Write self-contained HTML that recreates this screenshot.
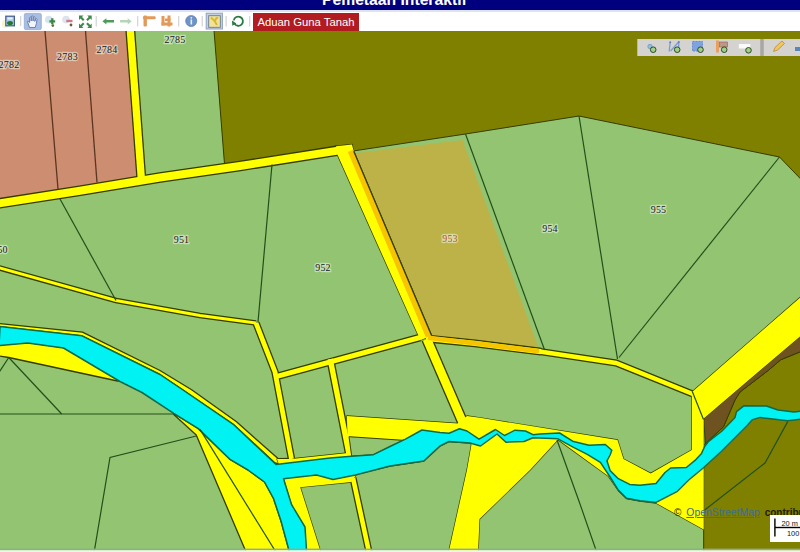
<!DOCTYPE html>
<html><head><meta charset="utf-8">
<style>
html,body{margin:0;padding:0;width:800px;height:552px;overflow:hidden;background:#fff;font-family:"Liberation Sans",sans-serif;}
#hdr{position:absolute;left:0;top:0;width:800px;height:10.1px;background:#00007e;overflow:hidden;}
#hdr span{position:absolute;left:322px;top:-8.6px;font:bold 15.7px "Liberation Sans",sans-serif;color:#fff;white-space:nowrap;}
#hline{position:absolute;left:0;top:10.1px;width:800px;height:1.8px;background:#dde3f3;}
#map{position:absolute;left:0;top:31px;width:800px;height:521px;}
#btn{position:absolute;left:253px;top:13px;width:106px;height:18px;background:#b21b1f;color:#fff;font-size:11.3px;line-height:18px;text-align:center;white-space:nowrap;}
#ui{position:absolute;left:0;top:0;}
.lb{font-family:"Liberation Serif",serif;font-size:10px;font-weight:normal;fill:#202020;text-anchor:middle;stroke:#eef6e8;stroke-width:2.4px;stroke-opacity:0.55;paint-order:stroke;letter-spacing:0.2px;}
#attr{position:absolute;left:674px;top:506.5px;word-spacing:2.2px;font:bold 10px "Liberation Sans",sans-serif;color:#1e1e00;white-space:nowrap;}
#attr a{color:#3d6f86;text-decoration:underline;font-weight:normal;font-size:10.4px;}
#scale{position:absolute;left:770px;top:515px;width:32px;height:27px;background:#fff;}
</style></head><body>
<div id="hdr"><span>Pemetaan Interaktif</span></div>
<div id="hline"></div>
<svg id="map" width="800" height="521" viewBox="0 31 800 521">
<rect x="0" y="31" width="800" height="521" fill="#93c472"/>
<polygon points="0,31 131,31 142,180 0,203" fill="#cd8d70"/>
<polygon points="213.9,29 801,29 801,179.3 779.5,157 579,116 465.5,134 353,151 224.5,164" fill="#808000" stroke="#363c00" stroke-width="1"/>
<polygon points="353,153.5 462.5,140 538.5,348 431,336" fill="#bdb247"/>
<polygon points="-1,345 27.7,342.5 63.5,347.5 120,381 117.5,381 8.75,357.5 -1,356" fill="#ffff00" stroke="#363c00" stroke-width="1.3" stroke-linejoin="round"/>
<polygon points="-1,323.5 82.5,332.2 160,370.5 192,390 236.5,421.8 278,458.6 292,458.5 300,470 281,464.7 275,463 233.75,424.7 183,390 160,374.5 82,335.8 -1,326.5" fill="#ffff00" stroke="#363c00" stroke-width="1.3" stroke-linejoin="round"/>
<polygon points="173.75,413.4 198,428.4 230,459.4 248,470 264.5,482 273.5,498.5 281,521 289.7,553 246.5,553 196.25,435 173.75,414.4" fill="#ffff00" stroke="#363c00" stroke-width="1.3" stroke-linejoin="round"/>
<polygon points="277,459 291.5,459 348,453 346.9,416 457.5,423.4 467,416 480,417.8 617.5,440 623.5,459 650.7,473.4 691.8,450 691.8,393 692.6,391.5 801,296.8 801,335.6 703.7,418.5 703.7,529.5 656,503 640,501 626.5,498.5 618.3,490.5 608.5,476.3 558,439.6 530,470 479.5,519 478,553 448.5,553 467,470 471.5,444.5 470,443 449,441.5 440,446 435,450.6 423.75,461 390,466 356.6,474 351.4,482 300.2,487.2 321,553 306.7,553 284,478.5" fill="#ffff00" stroke="#363c00" stroke-width="1.3" stroke-linejoin="round"/>
<polygon points="349,436.7 403,440.3 405,439.4 373.4,454.7 351.7,456.2" fill="#93c472" stroke="#363c00" stroke-width="1"/>
<polygon points="703.7,553 703.7,445 723.5,426.8 735,400 740,392 768,370.6 780.7,359.8 801,351.5 801,553" fill="#808000" stroke="#363c00" stroke-width="1"/>
<polygon points="703.7,418.5 801,335.6 801,351.5 780.7,359.8 768,370.6 740,392 735,400 723.5,426.8 705.4,443.5" fill="#6e5220" stroke="#363c00" stroke-width="1"/>
<polygon points="336,146.2 352,144.6 353.7,151.3 431.5,335.5 420.5,340.2 337.4,154.6" fill="#ffff00" stroke="#363c00" stroke-width="1.4"/>
<polyline points="130.3,30 141.3,178" fill="none" stroke="#363c00" stroke-width="9.9" stroke-linejoin="miter"/>
<polyline points="-2,203.5 80,190.75 160,177.5 240,166 338,150.6" fill="none" stroke="#363c00" stroke-width="10.6" stroke-linejoin="miter"/>
<polyline points="426.8,339 463,423" fill="none" stroke="#363c00" stroke-width="11.2" stroke-linejoin="miter"/>
<polyline points="420,337.5 277,376.3" fill="none" stroke="#363c00" stroke-width="7.6" stroke-linejoin="miter"/>
<polyline points="-2,267.5 116,300.5 200,315.5 256,323" fill="none" stroke="#363c00" stroke-width="5.6" stroke-linejoin="miter"/>
<polyline points="256,323 275,372 291.5,459" fill="none" stroke="#363c00" stroke-width="7.4" stroke-linejoin="miter"/>
<polyline points="330.2,359 349,454" fill="none" stroke="#363c00" stroke-width="8.0" stroke-linejoin="miter"/>
<polyline points="353,478 369.2,553" fill="none" stroke="#363c00" stroke-width="7.199999999999999" stroke-linejoin="miter"/>
<polyline points="426,338.5 475,343.4 541,351.7" fill="none" stroke="#363c00" stroke-width="7.800000000000001" stroke-linejoin="miter"/>
<polyline points="538,351.3 616,363 694,394.5" fill="none" stroke="#363c00" stroke-width="7.0" stroke-linejoin="miter"/>
<polyline points="130.3,30 141.3,178" fill="none" stroke="#ffff00" stroke-width="7.3" stroke-linejoin="miter"/>
<polyline points="-2,203.5 80,190.75 160,177.5 240,166 338,150.6" fill="none" stroke="#ffff00" stroke-width="8" stroke-linejoin="miter"/>
<polyline points="426.8,339 463,423" fill="none" stroke="#ffff00" stroke-width="8.6" stroke-linejoin="miter"/>
<polyline points="420,337.5 277,376.3" fill="none" stroke="#ffff00" stroke-width="5" stroke-linejoin="miter"/>
<polyline points="-2,267.5 116,300.5 200,315.5 256,323" fill="none" stroke="#ffff00" stroke-width="3" stroke-linejoin="miter"/>
<polyline points="256,323 275,372 291.5,459" fill="none" stroke="#ffff00" stroke-width="4.8" stroke-linejoin="miter"/>
<polyline points="330.2,359 349,454" fill="none" stroke="#ffff00" stroke-width="5.4" stroke-linejoin="miter"/>
<polyline points="353,478 369.2,553" fill="none" stroke="#ffff00" stroke-width="4.6" stroke-linejoin="miter"/>
<polyline points="426,338.5 475,343.4 541,351.7" fill="none" stroke="#ffff00" stroke-width="5.2" stroke-linejoin="miter"/>
<polyline points="538,351.3 616,363 694,394.5" fill="none" stroke="#ffff00" stroke-width="4.4" stroke-linejoin="miter"/>
<polygon points="336,146.2 352,144.6 353.7,151.3 431.5,335.5 420.5,340.2 337.4,154.6" fill="#ffff00"/>
<polygon points="277,459 291.5,459 348,453 346.9,416 457.5,423.4 467,416 480,417.8 617.5,440 623.5,459 650.7,473.4 691.8,450 691.8,393 692.6,391.5 801,296.8 801,335.6 703.7,418.5 703.7,529.5 656,503 640,501 626.5,498.5 618.3,490.5 608.5,476.3 558,439.6 530,470 479.5,519 478,553 448.5,553 467,470 471.5,444.5 470,443 449,441.5 440,446 435,450.6 423.75,461 390,466 356.6,474 351.4,482 300.2,487.2 321,553 306.7,553 284,478.5" fill="#ffff00"/>
<polygon points="349,436.7 403,440.3 405,439.4 373.4,454.7 351.7,456.2" fill="#93c472" stroke="#363c00" stroke-width="1"/>
<polyline points="350.5,150.8 428.5,336.5" fill="none" stroke="#f6c400" stroke-width="5.6"/>
<polyline points="428,337.8 475,343.2 539,351.2" fill="none" stroke="#f6c400" stroke-width="4.6"/>
<polyline points="353.7,151.3 431.5,335.5" fill="none" stroke="#363c00" stroke-width="1.2"/>
<polygon points="0,326.5 82,335.8 160,374.5 183,390 233.75,424.7 276,464.5 330,458 351.7,456.2 373.4,454.7 390,446.5 405,439.4 421.9,430 440,432.5 449,433.2 459.5,428.7 467,431 479,439.2 495.5,429.5 504.5,435.5 515,430.2 525.5,431 533,434.7 540,433.9 559.6,433 572.6,441.2 589,445.3 605.3,444.5 611.8,450.2 610.1,455 606.9,460.8 610.1,470.6 618.3,478.7 629.7,484.4 640,485.3 656,483.4 665,472.5 670.6,468 686.3,467.5 695,460.4 701.5,453.4 704.8,446.3 708,442 722,431 735,417.4 736.5,411.6 743.8,405.8 766.5,406 778,410 794,412 801,411 801,419 787.7,420.8 760,417.4 752.5,419.6 746.7,426 722,450.7 703.2,468 688.7,480 677.4,491.3 656,502.4 640,500.8 626.5,498.3 618.3,490.1 610.1,477 600.4,462.4 587.3,454.3 572.6,446.9 558,438.8 540,438 533,437.7 524,441.5 506,442.2 497,434 480.5,446 470,443 449,441.5 440,446 435,450.6 423.75,461 390,466 355.5,475 333,479.5 316.5,475 283.5,478.7 291.5,504.5 305,527 306.7,553 289.7,553 281,521 273.5,498.5 264.5,482 248,470 230,459.4 198,428.4 173.75,413.4 142,392.5 120,381.5 63.5,348 27.7,343 -1,345.5" fill="#00f2f2" stroke="#0f6a48" stroke-width="1.5" stroke-linejoin="round"/>
<polyline points="45,31 58,189" fill="none" stroke="#5a3520" stroke-width="1.3"/>
<polyline points="85.5,31 97,182.5" fill="none" stroke="#5a3520" stroke-width="1.3"/>
<polyline points="60,199 116,300.5" fill="none" stroke="#22501a" stroke-width="1.2"/>
<polyline points="272,164.5 258,322" fill="none" stroke="#22501a" stroke-width="1.2"/>
<polyline points="465.5,134 544.6,350" fill="none" stroke="#22501a" stroke-width="1.2"/>
<polyline points="579,116 617.5,359" fill="none" stroke="#22501a" stroke-width="1.2"/>
<polyline points="779.5,157 619,357.5" fill="none" stroke="#22501a" stroke-width="1.2"/>
<polyline points="8.75,357.5 61.7,414" fill="none" stroke="#22501a" stroke-width="1.2"/>
<polyline points="8.75,357.5 -1,372.5" fill="none" stroke="#22501a" stroke-width="1.2"/>
<polyline points="-1,414 174.7,414" fill="none" stroke="#22501a" stroke-width="1.2"/>
<polyline points="196.25,436 110,457.5 94,553" fill="none" stroke="#22501a" stroke-width="1.2"/>
<polyline points="200,429.4 276.5,553" fill="none" stroke="#22501a" stroke-width="1.2"/>
<polyline points="557,440 580,504 597,553" fill="none" stroke="#22501a" stroke-width="1.2"/>
<polyline points="692.2,391.3 703.5,419.5" fill="none" stroke="#22501a" stroke-width="1.2"/>
<polyline points="787.7,421.6 765,463 704.7,510" fill="none" stroke="#22501a" stroke-width="1.2"/>
<text x="9" y="68" class="lb">2782</text>
<text x="67.5" y="59.5" class="lb">2783</text>
<text x="107" y="53" class="lb">2784</text>
<text x="175" y="43" class="lb">2785</text>
<text x="0" y="253" class="lb">950</text>
<text x="181.5" y="242.5" class="lb">951</text>
<text x="323" y="271" class="lb">952</text>
<text x="550" y="232" class="lb">954</text>
<text x="658.5" y="213" class="lb">955</text>
<text x="450" y="242" class="lb" style="fill:#b8582a">953</text>
<rect x="0" y="548.6" width="800" height="1.6" fill="#8fae86"/>
<rect x="0" y="550.2" width="800" height="2" fill="#eaf8ea"/>
</svg>
<div id="attr"><span style="font-weight:normal">©</span> <a>OpenStreetMap</a> contributors</div>
<div id="scale"></div>
<svg id="ui" width="800" height="552">
<!-- toolbar separators -->
<g fill="#d6d6d6">
<rect x="20" y="16" width="1.3" height="10"/><rect x="95.6" y="16" width="1.3" height="10.5"/>
<rect x="137" y="16" width="1.3" height="10.5"/><rect x="178" y="16" width="1.3" height="10.5"/>
<rect x="201.6" y="16" width="1.3" height="10.5"/><rect x="225.5" y="16" width="1.3" height="10.5"/>
<rect x="249" y="16" width="1.3" height="10.5"/>
</g>
<!-- save icon -->
<rect x="2" y="20" width="7" height="8" rx="3" fill="#f4f0c0" opacity="0.7"/>
<rect x="5.8" y="16.2" width="8.6" height="9.6" fill="#aec8e8" stroke="#3f5c8c" stroke-width="1.2"/>
<rect x="7.5" y="17.5" width="5" height="2" fill="#e8f0f8"/>
<ellipse cx="10" cy="23" rx="3" ry="2" fill="#1f7a2a"/>
<!-- hand selected -->
<rect x="24.3" y="13.4" width="17" height="16.2" rx="1.5" fill="#a8bde2" stroke="#92a9d6" stroke-width="0.8"/>
<path d="M29.5 27.5 L27.6 22 Q27.4 20.6 28.6 21.3 L29.6 22.5 L29.6 17.6 Q30.4 16.5 31.1 17.6 L31.2 21 L31.4 16.4 Q32.2 15.4 33 16.4 L33 21 L33.5 17 Q34.3 16.1 35 17.2 L34.8 21.4 L35.7 18.8 Q36.6 18.2 37 19.2 L36.4 23.6 L35.2 27.5 Z" fill="#f2f5fb" stroke="#5d78ad" stroke-width="0.9"/>
<!-- zoom in -->
<circle cx="48.8" cy="19.6" r="3.8" fill="#d4e4f0"/>
<path d="M49.4 21.3 h5.8 M52.3 18.3 v6" stroke="#3a8a45" stroke-width="2.3"/>
<circle cx="52.8" cy="25.6" r="1.3" fill="#5d6a3a"/>
<!-- zoom out -->
<circle cx="66" cy="19.6" r="3.8" fill="#dce4f0"/>
<path d="M66.3 21 h6.2" stroke="#d27787" stroke-width="2.4"/>
<circle cx="71" cy="25" r="1.4" fill="#6b5a3a"/>
<!-- zoom extent -->
<g fill="#3e8a4a">
<path d="M79 15.5 h4.5 l-1.5 1.5 l2.5 2.5 l-1.5 1.5 l-2.5 -2.5 l-1.5 1.5 z"/>
<path d="M91.7 15.5 v4.5 l-1.5 -1.5 l-2.5 2.5 l-1.5 -1.5 l2.5 -2.5 l-1.5 -1.5 z"/>
<path d="M79 28 v-4.5 l1.5 1.5 l2.5 -2.5 l1.5 1.5 l-2.5 2.5 l1.5 1.5 z"/>
<path d="M91.7 28 h-4.5 l1.5 -1.5 l-2.5 -2.5 l1.5 -1.5 l2.5 2.5 l1.5 -1.5 z"/>
</g>
<!-- back/forward -->
<path d="M102.4 21.2 l4 -3 v1.8 h7.6 v2.6 h-7.6 v1.8 z" fill="#4e9a58"/>
<path d="M131.7 21.2 l-4 -3 v1.8 h-7.6 v2.6 h7.6 v1.8 z" fill="#b4d6b6"/>
<!-- orange icons -->
<g fill="#e29a5a">
<rect x="143.5" y="15.5" width="3.4" height="11" rx="1"/>
<rect x="143" y="16.2" width="12.6" height="3" rx="1"/>
<rect x="161.5" y="16" width="3" height="9.5"/>
<rect x="161.5" y="22.5" width="11" height="3"/>
<rect x="167.5" y="15.5" width="3" height="11"/>
<rect x="165" y="18.5" width="5.5" height="2.5"/>
</g>
<!-- info -->
<circle cx="191.2" cy="21" r="5.6" fill="#6f93c6" stroke="#5377b0" stroke-width="0.6"/>
<rect x="190.5" y="19.5" width="1.6" height="5" fill="#e8eef8"/>
<circle cx="191.3" cy="17.8" r="0.9" fill="#e8eef8"/>
<!-- selected box w/ yellow icon -->
<rect x="206.2" y="13.2" width="16.2" height="15.8" fill="#c5d0e2" stroke="#8ea2c4" stroke-width="1"/>
<rect x="208.7" y="15.7" width="11.6" height="11.6" fill="#f1e49a" stroke="#6b7b92" stroke-width="0.9"/>
<path d="M211 17.5 l4 4 l1 -3 l2 -1 M214 20 l3 5" stroke="#d9b830" stroke-width="2" fill="none"/>
<!-- refresh -->
<path d="M233.8 20.3 A4.6 4.6 0 1 1 234.4 23.6" fill="none" stroke="#2b7a44" stroke-width="1.8"/>
<path d="M232 20.6 L236.4 23.4 L232.3 25.8 Z" fill="#2b7a44"/>
<!-- edit toolbar -->
<rect x="637.3" y="39" width="163" height="17" fill="#d5d3d0"/>
<rect x="760.2" y="39" width="3.6" height="17" fill="#a9a7a4"/>
<circle cx="650" cy="46.5" r="2.2" fill="#8cc0e0" stroke="#5a8cb8" stroke-width="0.6"/>
<circle cx="653.2" cy="49.7" r="2.8" fill="#9ed08a" stroke="#2f4a22" stroke-width="1"/>
<path d="M669.2 51.5 L670.2 42.2 M670.6 51 L678.6 42 M678.8 42 L678.6 47" fill="none" stroke="#7b9bd2" stroke-width="1.3"/><circle cx="670.2" cy="42.2" r="1" fill="#5a80c0"/><circle cx="678.8" cy="42" r="1" fill="#5a80c0"/>
<circle cx="677.2" cy="49.7" r="2.8" fill="#9ed08a" stroke="#2f4a22" stroke-width="1"/>
<rect x="692.5" y="41.5" width="10" height="9.5" fill="#7da4e0" stroke="#5a80c0" stroke-width="0.8" stroke-dasharray="2,1"/>
<circle cx="700.5" cy="49.7" r="2.8" fill="#9ed08a" stroke="#2f4a22" stroke-width="1"/>
<rect x="716" y="40.5" width="3" height="12" fill="#e8a060"/>
<rect x="719.5" y="42" width="8" height="5" fill="#b89a8a" stroke="#a05a40" stroke-width="0.6"/>
<circle cx="724.2" cy="49.7" r="2.8" fill="#9ed08a" stroke="#2f4a22" stroke-width="1"/>
<rect x="738.8" y="44" width="11.5" height="4.5" fill="#fafafa"/>
<circle cx="748.5" cy="50.3" r="2.8" fill="#9ed08a" stroke="#2f4a22" stroke-width="1"/>
<path d="M773.5 51.5 l1.5 -4 l7 -6.5 l2.5 2.5 l-7 6.5 z" fill="#f2c85a" stroke="#b08030" stroke-width="0.7"/>
<rect x="795" y="47" width="6" height="4" fill="#5a86b8"/>
<!-- scale bar -->
<rect x="774.2" y="518.5" width="1.4" height="18" fill="#000"/>
<rect x="775" y="526.8" width="26" height="1.4" fill="#000"/>
<text x="781.5" y="525.8" font-family="Liberation Sans" font-size="7.4" fill="#111">20 m</text>
<text x="787" y="535.8" font-family="Liberation Sans" font-size="7.4" fill="#111">100</text>

</svg>
<div id="btn">Aduan Guna Tanah</div>
</body></html>
